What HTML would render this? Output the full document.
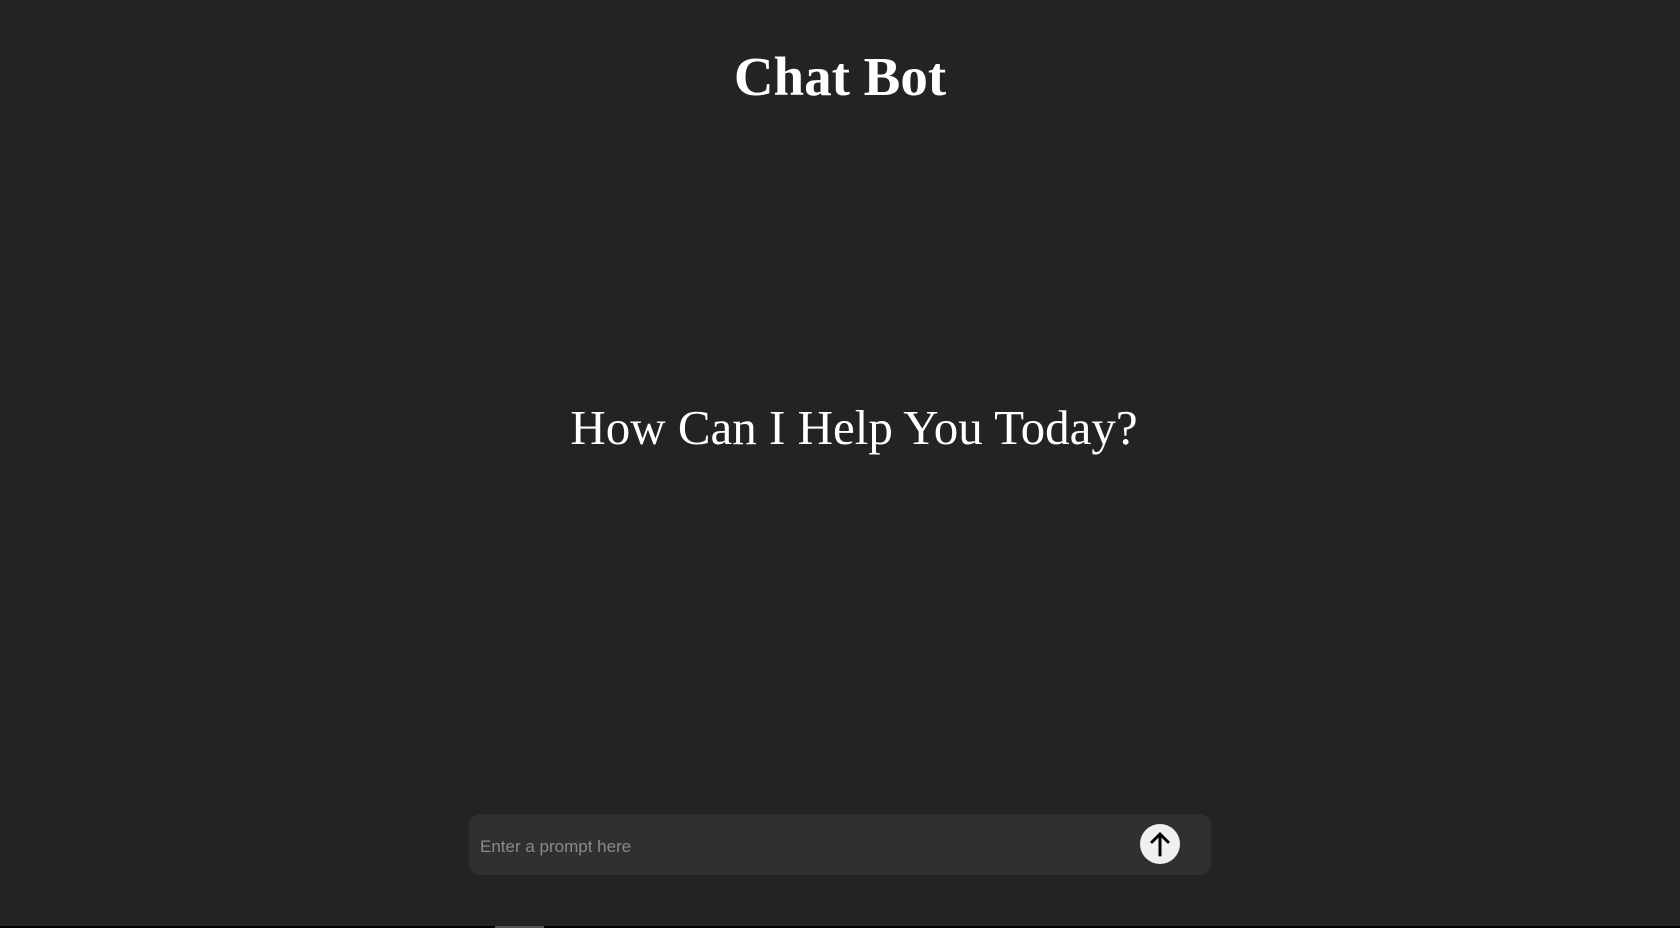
<!DOCTYPE html>
<html><head><meta charset="utf-8"><style>
html,body{margin:0;padding:0;width:1680px;height:928px;background:#232323;overflow:hidden;position:relative;font-family:"Liberation Serif",serif;color:#fff}
h1{position:absolute;left:0;width:1680px;top:42px;margin:0;text-align:center;font-size:55px;font-weight:bold;line-height:70px}
.q{position:absolute;left:14px;width:1680px;top:398px;text-align:center;font-size:49px;line-height:60px}
.inp{position:absolute;left:469px;top:814px;width:742px;height:61px;background:#303030;border-radius:12px}
.ph{position:absolute;left:11px;top:1px;line-height:63px;font-family:"Liberation Sans",sans-serif;font-size:17px;color:#8a8a8a}
.btn{position:absolute;left:671px;top:10px;width:40px;height:40px;border-radius:50%;background:#f0f0f0}
.bar{position:absolute;left:0;top:926px;width:1680px;height:2px;background:#000}
.bar i{position:absolute;left:495px;width:49px;height:2px;background:#555}
</style></head><body>
<h1>Chat Bot</h1>
<div class="q">How Can I Help You Today?</div>
<div class="inp"><div class="ph">Enter a prompt here</div>
<div class="btn"><svg width="40" height="40" viewBox="0 0 40 40"><path d="M20 31V10M12 18l8-8 8 8" fill="none" stroke="#000" stroke-width="3" stroke-linecap="round" stroke-linejoin="round"/></svg></div></div>
<div class="bar"><i></i></div>
</body></html>
